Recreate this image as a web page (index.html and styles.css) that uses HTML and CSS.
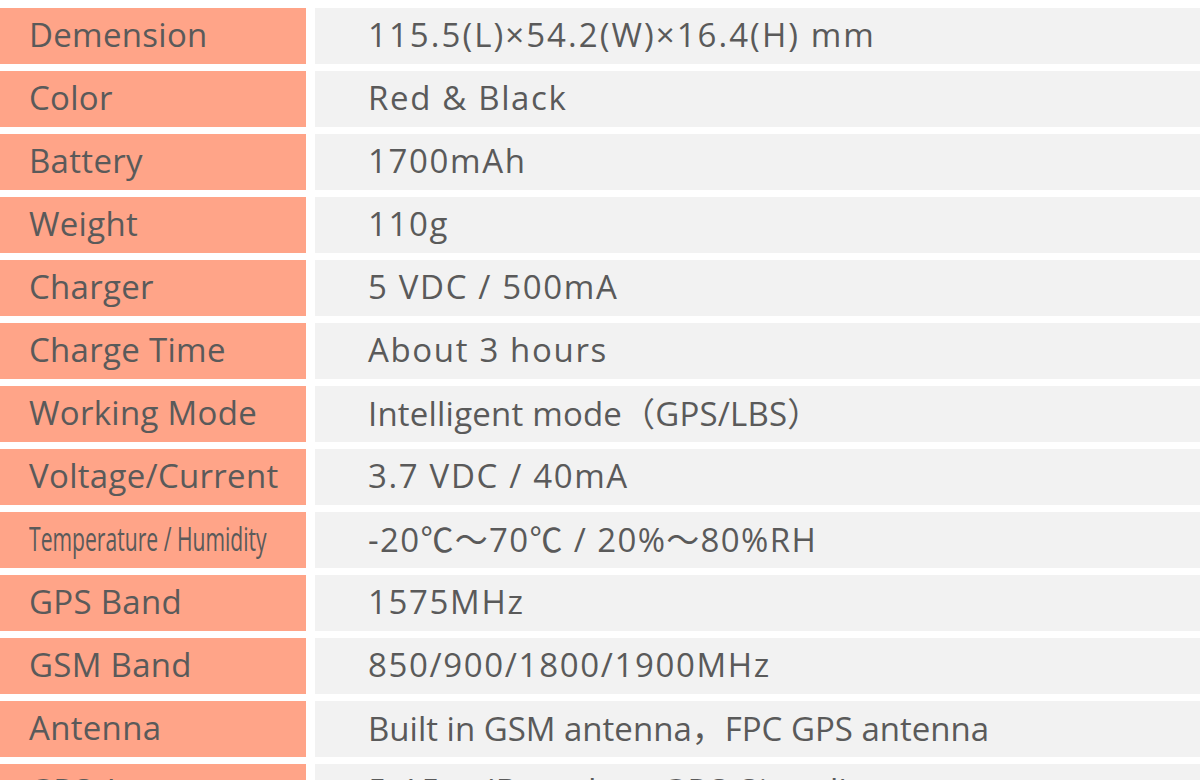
FILE: index.html
```html
<!DOCTYPE html>
<html>
<head>
<meta charset="utf-8">
<link rel="stylesheet" href="styles.css">
</head>
<body>
<div class="spec">
  <div class="row"><div class="label">Demension</div><div class="value value-wide">115.5(L)×54.2(W)×16.4(H) mm</div></div>
  <div class="row"><div class="label">Color</div><div class="value">Red &amp; Black</div></div>
  <div class="row"><div class="label">Battery</div><div class="value">1700mAh</div></div>
  <div class="row"><div class="label">Weight</div><div class="value">110g</div></div>
  <div class="row"><div class="label">Charger</div><div class="value">5 VDC / 500mA</div></div>
  <div class="row"><div class="label">Charge Time</div><div class="value">About 3 hours</div></div>
  <div class="row"><div class="label">Working Mode</div><div class="value value-snug">Intelligent mode（GPS/LBS）</div></div>
  <div class="row"><div class="label">Voltage/Current</div><div class="value">3.7 VDC / 40mA</div></div>
  <div class="row"><div class="label"><span class="condensed">Temperature / Humidity</span></div><div class="value value-temp">-20℃～70℃ / 20%～80%RH</div></div>
  <div class="row"><div class="label">GPS Band</div><div class="value">1575MHz</div></div>
  <div class="row"><div class="label">GSM Band</div><div class="value">850/900/1800/1900MHz</div></div>
  <div class="row"><div class="label">Antenna</div><div class="value value-tight">Built in GSM antenna，FPC GPS antenna</div></div>
  <div class="row"><div class="label">GPS Accuracy</div><div class="value">5-15m (Based on GPS Signal)</div></div>
</div>
</body>
</html>
```

FILE: styles.css
```css
html, body {
  margin: 0;
  padding: 0;
  background: #ffffff;
  overflow: hidden;
}
.spec {
  display: flex;
  flex-direction: column;
  gap: 7px;
  padding-top: 8px;
  font-family: "Open Sans", "Noto Sans CJK SC", sans-serif;
  color: #5a5a5a;
}
.row {
  display: flex;
  gap: 9px;
  height: 56px;
  flex: none;
}
.label {
  width: 306px;
  flex: none;
  background: #ffa488;
  padding: 0 0 4px 29px;
  box-sizing: border-box;
  display: flex;
  align-items: center;
  font-size: 33px;
  letter-spacing: 0.3px;
  white-space: nowrap;
}
.value {
  flex: 1;
  background: #f2f2f2;
  padding: 0 0 4px 53px;
  display: flex;
  align-items: center;
  font-size: 33px;
  letter-spacing: 1.65px;
  white-space: nowrap;
}
.value-wide {
  letter-spacing: 2.05px;
}
.value-snug {
  letter-spacing: 0.2px;
}
.value-temp {
  letter-spacing: 1.35px;
}
.value-tight {
  letter-spacing: 0;
}
.condensed {
  display: inline-block;
  letter-spacing: 0;
  transform: scaleX(0.64);
  transform-origin: left center;
}
```
